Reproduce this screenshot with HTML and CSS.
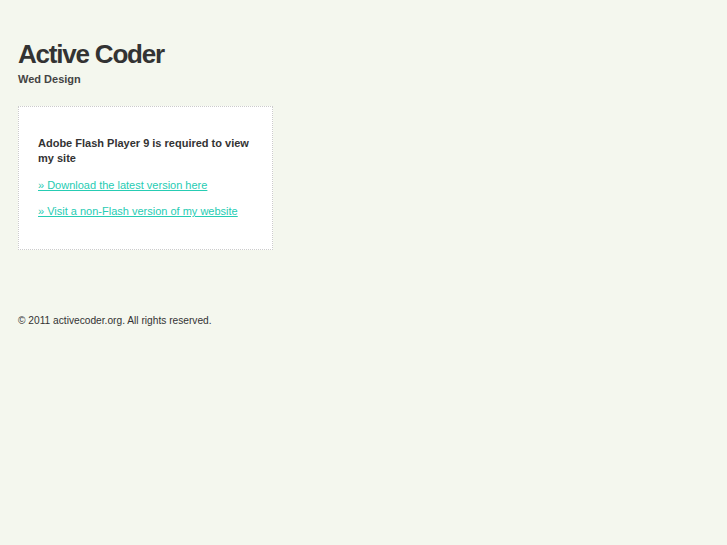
FILE: index.html
```html
<!DOCTYPE html>
<html>
<head>
<meta charset="utf-8">
<link rel="stylesheet" href="styles.css">
</head>
<body>
<div class="page">
  <header class="header">
    <h1 class="title">Active Coder</h1>
    <p class="subtitle">Wed Design</p>
  </header>
  <div class="flash-box">
    <p class="notice">Adobe Flash Player 9 is required to view my site</p>
    <p class="link-row first"><a href="#">» Download the latest version here</a></p>
    <p class="link-row"><a href="#">» Visit a non-Flash version of my website</a></p>
  </div>
  <footer class="footer">© 2011 activecoder.org. All rights reserved.</footer>
</div>
</body>
</html>
```
FILE: styles.css
```css
html, body {
  margin: 0;
  padding: 0;
  background: #f4f7ee;
}
body {
  font-family: "Liberation Sans", Arial, sans-serif;
  color: #333;
}
.page {
  padding: 39px 0 0 18px;
}
.title {
  margin: 0;
  font-size: 26px;
  line-height: 30px;
  font-weight: bold;
  letter-spacing: -1.2px;
  color: #333;
}
.subtitle {
  margin: 3px 0 0;
  font-size: 11px;
  line-height: 15px;
  font-weight: bold;
  color: #444;
}
.flash-box {
  margin-top: 19px;
  width: 216px;
  padding: 29px 18px 30px 19px;
  background: #fff;
  border: 1px dotted #ccc;
}
.notice {
  margin: 0;
  font-size: 11px;
  line-height: 15px;
  font-weight: bold;
  color: #333;
}
.link-row {
  margin: 11px 0 0;
  font-size: 11px;
  line-height: 15px;
}
.link-row.first {
  margin-top: 12px;
}
.link-row a {
  color: #26ccb3;
}
.footer {
  margin-top: 64px;
  font-size: 10.2px;
  line-height: 14px;
  color: #333;
}
```
